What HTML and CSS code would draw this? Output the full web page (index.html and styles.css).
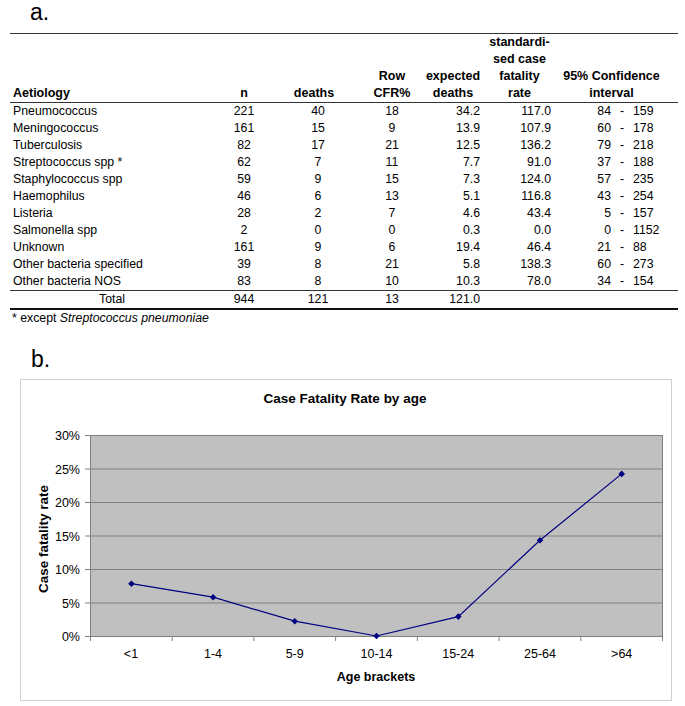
FILE: index.html
```html
<!DOCTYPE html>
<html>
<head>
<meta charset="utf-8">
<link rel="stylesheet" href="styles.css">
</head>
<body>
<div class="label label-a">a.</div>
<table class="tbl">
  <colgroup>
    <col class="c1"><col class="c2"><col class="c3"><col class="c4"><col class="c5"><col class="c6"><col class="c7">
  </colgroup>
  <thead>
    <tr>
      <th class="left">Aetiology</th>
      <th>n</th>
      <th class="deaths-h">deaths</th>
      <th>Row<br>CFR%</th>
      <th>expected<br>deaths</th>
      <th>standardi-<br>sed case<br>fatality<br>rate</th>
      <th class="ci-h">95% Confidence<br>interval</th>
    </tr>
  </thead>
  <tbody>
    <tr><td class="left">Pneumococcus</td><td>221</td><td>40</td><td>18</td><td class="r">34.2</td><td class="r">117.0</td><td class="ci"><span class="lo">84</span><span class="dash">-</span><span class="hi">159</span></td></tr>
    <tr><td class="left">Meningococcus</td><td>161</td><td>15</td><td>9</td><td class="r">13.9</td><td class="r">107.9</td><td class="ci"><span class="lo">60</span><span class="dash">-</span><span class="hi">178</span></td></tr>
    <tr><td class="left">Tuberculosis</td><td>82</td><td>17</td><td>21</td><td class="r">12.5</td><td class="r">136.2</td><td class="ci"><span class="lo">79</span><span class="dash">-</span><span class="hi">218</span></td></tr>
    <tr><td class="left">Streptococcus spp *</td><td>62</td><td>7</td><td>11</td><td class="r">7.7</td><td class="r">91.0</td><td class="ci"><span class="lo">37</span><span class="dash">-</span><span class="hi">188</span></td></tr>
    <tr><td class="left">Staphylococcus spp</td><td>59</td><td>9</td><td>15</td><td class="r">7.3</td><td class="r">124.0</td><td class="ci"><span class="lo">57</span><span class="dash">-</span><span class="hi">235</span></td></tr>
    <tr><td class="left">Haemophilus</td><td>46</td><td>6</td><td>13</td><td class="r">5.1</td><td class="r">116.8</td><td class="ci"><span class="lo">43</span><span class="dash">-</span><span class="hi">254</span></td></tr>
    <tr><td class="left">Listeria</td><td>28</td><td>2</td><td>7</td><td class="r">4.6</td><td class="r">43.4</td><td class="ci"><span class="lo">5</span><span class="dash">-</span><span class="hi">157</span></td></tr>
    <tr><td class="left">Salmonella spp</td><td>2</td><td>0</td><td>0</td><td class="r">0.3</td><td class="r">0.0</td><td class="ci"><span class="lo">0</span><span class="dash">-</span><span class="hi">1152</span></td></tr>
    <tr><td class="left">Unknown</td><td>161</td><td>9</td><td>6</td><td class="r">19.4</td><td class="r">46.4</td><td class="ci"><span class="lo">21</span><span class="dash">-</span><span class="hi">88</span></td></tr>
    <tr><td class="left">Other bacteria specified</td><td>39</td><td>8</td><td>21</td><td class="r">5.8</td><td class="r">138.3</td><td class="ci"><span class="lo">60</span><span class="dash">-</span><span class="hi">273</span></td></tr>
    <tr><td class="left">Other bacteria NOS</td><td>83</td><td>8</td><td>10</td><td class="r">10.3</td><td class="r">78.0</td><td class="ci"><span class="lo">34</span><span class="dash">-</span><span class="hi">154</span></td></tr>
  </tbody>
  <tfoot>
    <tr><td>Total</td><td>944</td><td>121</td><td>13</td><td class="r">121.0</td><td></td><td></td></tr>
  </tfoot>
</table>
<div class="footnote">* except <i>Streptococcus pneumoniae</i></div>
<div class="label label-b">b.</div>
<div class="chart">
  <svg class="chart-svg" width="650" height="320" viewBox="21 379 650 320" xmlns="http://www.w3.org/2000/svg">
    <text class="ttl" x="345" y="402" text-anchor="middle">Case Fatality Rate  by age</text>
    <rect x="90.5" y="434.5" width="572" height="201" fill="#c0c0c0" stroke="#808080" stroke-width="1"/>
    <g stroke="#808080" stroke-width="1">
      <line x1="90" y1="468" x2="662" y2="468"/>
      <line x1="90" y1="501.5" x2="662" y2="501.5"/>
      <line x1="90" y1="535" x2="662" y2="535"/>
      <line x1="90" y1="568.5" x2="662" y2="568.5"/>
      <line x1="90" y1="602" x2="662" y2="602"/>
      <line x1="85" y1="434.5" x2="90" y2="434.5"/>
      <line x1="85" y1="468" x2="90" y2="468"/>
      <line x1="85" y1="501.5" x2="90" y2="501.5"/>
      <line x1="85" y1="535" x2="90" y2="535"/>
      <line x1="85" y1="568.5" x2="90" y2="568.5"/>
      <line x1="85" y1="602" x2="90" y2="602"/>
      <line x1="85" y1="635.5" x2="90" y2="635.5"/>
      <line x1="90.5" y1="635" x2="90.5" y2="640"/>
      <line x1="172.2" y1="635" x2="172.2" y2="640"/>
      <line x1="253.9" y1="635" x2="253.9" y2="640"/>
      <line x1="335.6" y1="635" x2="335.6" y2="640"/>
      <line x1="417.4" y1="635" x2="417.4" y2="640"/>
      <line x1="499.1" y1="635" x2="499.1" y2="640"/>
      <line x1="580.8" y1="635" x2="580.8" y2="640"/>
      <line x1="662.5" y1="635" x2="662.5" y2="640"/>
    </g>
    <g class="lbl" text-anchor="end">
      <text x="80" y="439">30%</text>
      <text x="80" y="472.5">25%</text>
      <text x="80" y="506">20%</text>
      <text x="80" y="539.5">15%</text>
      <text x="80" y="573">10%</text>
      <text x="80" y="606.5">5%</text>
      <text x="80" y="640">0%</text>
    </g>
    <g class="lbl" text-anchor="middle">
      <text x="131" y="657">&lt;1</text>
      <text x="213" y="657">1-4</text>
      <text x="294.7" y="657">5-9</text>
      <text x="376.5" y="657">10-14</text>
      <text x="458.2" y="657">15-24</text>
      <text x="540" y="657">25-64</text>
      <text x="621.7" y="657">&gt;64</text>
    </g>
    <text class="axt" x="376" y="680" text-anchor="middle">Age brackets</text>
    <text class="axt axt-y" x="0" y="0" text-anchor="middle" transform="translate(47.5 538) rotate(-90)">Case fatality rate</text>
    <polyline fill="none" stroke="#000080" stroke-width="1.2" points="131.4,582.7 213.1,596.2 294.8,620.2 376.5,635 458.3,615.6 540,539.2 621.7,472.9"/>
    <g fill="#000080">
      <polygon points="131.4,579.4 134.7,582.7 131.4,586 128.1,582.7"/>
      <polygon points="213.1,592.9 216.4,596.2 213.1,599.5 209.8,596.2"/>
      <polygon points="294.8,616.9 298.1,620.2 294.8,623.5 291.5,620.2"/>
      <polygon points="376.5,631.7 379.8,635 376.5,638.3 373.2,635"/>
      <polygon points="458.3,612.3 461.6,615.6 458.3,618.9 455,615.6"/>
      <polygon points="540,535.9 543.3,539.2 540,542.5 536.7,539.2"/>
      <polygon points="621.7,469.6 625,472.9 621.7,476.2 618.4,472.9"/>
    </g>
  </svg>
</div>
</body>
</html>
```
FILE: styles.css
```css
html, body {
  margin: 0;
  padding: 0;
  background: #ffffff;
}
body {
  font-family: "Liberation Sans", Arial, sans-serif;
  color: #000;
  width: 685px;
}
.label {
  font-size: 23px;
  line-height: 23px;
  padding-left: 30px;
}
.label-a {
  height: 32px;
  padding-top: 1px;
}
.label-b {
  padding-top: 22px;
  padding-bottom: 8px;
  padding-left: 31px;
}
.tbl {
  margin-left: 10px;
  width: 668px;
  border-collapse: collapse;
  table-layout: fixed;
  font-size: 12.3px;
  border-top: 1px solid #333;
}
.c1 { width: 204px; }
.c2 { width: 60px; }
.c3 { width: 88px; }
.c4 { width: 60px; }
.c5 { width: 62px; }
.c6 { width: 71px; }
.c7 { width: 123px; }
.tbl th {
  font-weight: bold;
  font-size: 12.5px;
  height: 67px;
  line-height: 17px;
  padding: 0;
  vertical-align: bottom;
  text-align: center;
  border-bottom: 1px solid #333;
  white-space: nowrap;
}
.tbl th.deaths-h { padding-right: 8px; }
.tbl th.ci-h { padding-right: 10px; }
.tbl td {
  height: 17px;
  line-height: 17px;
  padding: 0;
  text-align: center;
  white-space: nowrap;
}
.tbl .left {
  text-align: left;
  padding-left: 3px;
}
.tbl td.r {
  text-align: right;
  padding-right: 4px;
}
.tbl td.ci {
  text-align: left;
}
.lo {
  display: inline-block;
  width: 56px;
  text-align: right;
}
.dash {
  display: inline-block;
  width: 22px;
  text-align: center;
}
.hi {
  display: inline-block;
}
.tbl tfoot td {
  border-top: 1px solid #333;
  border-bottom: 2px solid #111;
}
.footnote {
  font-size: 12.3px;
  line-height: 16px;
  padding-left: 12px;
}
.chart {
  margin-left: 20px;
  width: 650px;
  height: 320px;
  border: 1px solid #cfcfcf;
}
.chart-svg {
  display: block;
  font-family: "Liberation Sans", Arial, sans-serif;
}
.ttl {
  font-weight: bold;
  font-size: 13.5px;
}
.lbl {
  font-size: 12.5px;
}
.axt {
  font-weight: bold;
  font-size: 12.5px;
}
.axt-y {
  font-size: 13.5px;
}
```
